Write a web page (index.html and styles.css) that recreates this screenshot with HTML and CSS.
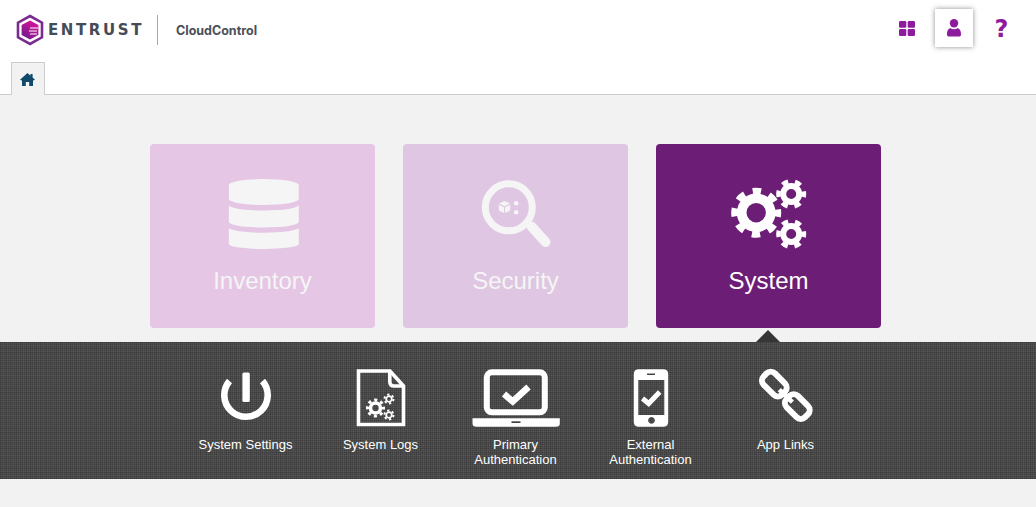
FILE: index.html
```html
<!DOCTYPE html>
<html lang="en">
<head>
  <meta charset="UTF-8">
  <meta name="viewport" content="width=device-width, initial-scale=1.0">
  <title>CloudControl</title>
  <link rel="stylesheet" href="styles.css">
</head>
<body>
  <header class="topbar">
    <div class="brand">
      <svg class="brand-mark" viewBox="0 0 28 32" aria-hidden="true">
        <defs>
          <linearGradient id="markFill" x1="0.8" y1="0" x2="0.2" y2="1">
            <stop offset="0" stop-color="#e0109a"/>
            <stop offset="1" stop-color="#6a1f8c"/>
          </linearGradient>
        </defs>
        <path d="M14 2 26 8.7V23.3L14 30 2 23.3V8.7Z" fill="none" stroke="#7b2a90" stroke-width="2.6"/>
        <path d="M14 6.4 22.4 11V21L14 25.6 5.6 21V11Z" fill="url(#markFill)"/>
        <path d="M14 14h8M13 17h8M14 20h7" stroke="#fff" stroke-width="1.2"/>
      </svg>
      <span class="brand-name">ENTRUST</span>
      <span class="brand-rule"></span>
      <span class="brand-product">CloudControl</span>
    </div>
    <nav class="tools">
      <a class="tool">
        <svg width="16" height="15" viewBox="0 0 16 15" aria-hidden="true">
          <rect width="7.3" height="6.7" rx="1.2"/><rect x="8.7" width="7.3" height="6.7" rx="1.2"/>
          <rect y="8.1" width="7.3" height="6.9" rx="1.2"/><rect x="8.7" y="8.1" width="7.3" height="6.9" rx="1.2"/>
        </svg>
      </a>
      <a class="tool tool-active">
        <svg width="14" height="18" viewBox="0 0 14 18" aria-hidden="true">
          <circle cx="7" cy="4.3" r="4.2"/>
          <path d="M0 15.5C0 11.5 1.6 9.3 3.6 9.3 4.6 10 5.7 10.3 7 10.3S9.4 10 10.4 9.3C12.4 9.3 14 11.5 14 15.5 14 17 13 17.6 12 17.6H2C1 17.6 0 17 0 15.5Z"/>
        </svg>
      </a>
      <a class="tool tool-help">?</a>
    </nav>
  </header>

  <div class="tabs">
    <a class="tab">
      <svg width="15" height="13" viewBox="0 0 15 13" aria-hidden="true">
        <path d="M7.5 0 10.5 2.7V1H12.6V4.6L15 6.8 13.4 7.6 13 7.3V13H9.2V9H5.8V13H2V7.3L1.6 7.6 0 6.8Z"/>
      </svg>
    </a>
  </div>

  <main class="content">
    <section class="cards">
      <a class="card card-inventory">
        <svg class="card-icon" viewBox="-55 -40 110 80" aria-hidden="true">
          <g transform="translate(.8 0)">
            <path d="M-35-29A35 6 0 0 1 35-29V-15A35 6 0 0 1-35-15Z"/>
            <path d="M-35-9A35 5.5 0 0 0 35-9V8A35 5.5 0 0 1-35 8Z"/>
            <path d="M-35 13.7A35 5 0 0 0 35 13.7V30A35 5 0 0 1-35 30Z"/>
          </g>
        </svg>
        <span class="card-label">Inventory</span>
      </a>
      <a class="card card-security">
        <svg class="card-icon" viewBox="-55 -40 110 80" aria-hidden="true">
          <circle class="line" cx="-7.2" cy="-6.7" r="23.5" stroke-width="7"/>
          <path class="line" d="M15.5 12.5 29.5 28" stroke-width="10"/>
          <path d="M-17-10.4-11.5-13-6-10.4-11.5-7.8ZM-17.2-9.2-12-6.7V-1L-17.2-3.4ZM-5.8-9.2-11-6.7V-1L-5.8-3.4Z"/>
          <circle cx=".2" cy="-10.7" r="2.3"/>
          <circle cx=".2" cy="-1.7" r="2.3"/>
        </svg>
        <span class="card-label">Security</span>
      </a>
      <a class="card card-system">
        <svg class="card-icon" viewBox="-55 -40 110 80" aria-hidden="true">
          <g transform="translate(-12.8 -1.3)">
            <circle class="line" r="14.5" stroke-width="9.6"/>
            <circle class="line" r="21.5" stroke-width="7" stroke-dasharray="8.4 8.49" stroke-dashoffset="4.2"/>
          </g>
          <g transform="translate(22.2 -20)">
            <circle class="line" r="8" stroke-width="6"/>
            <circle class="line" r="12.8" stroke-width="4.4" stroke-dasharray="6.4 7" stroke-dashoffset="3.2"/>
          </g>
          <g transform="translate(22.2 20)">
            <circle class="line" r="8" stroke-width="6"/>
            <circle class="line" r="12.8" stroke-width="4.4" stroke-dasharray="6.4 7" stroke-dashoffset="3.2"/>
          </g>
        </svg>
        <span class="card-label">System</span>
      </a>
    </section>

    <section class="menu">
      <a class="menu-item">
        <svg class="menu-icon" viewBox="-45 -30 90 60" aria-hidden="true">
          <path class="line" d="M-16.5-17A21.7 21.7 0 1 0 16.5-17" stroke-width="6.6"/>
          <rect x="-3.6" y="-25.5" width="7.4" height="29.5" rx="1.5"/>
        </svg>
        <span class="menu-label">System Settings</span>
      </a>
      <a class="menu-item">
        <svg class="menu-icon" viewBox="-45 -30 90 60" aria-hidden="true">
          <path class="line" d="M-22.5-27H9L22.5-12V26.5H-22.5Z" stroke-width="3.6"/>
          <path class="line" d="M8.8-27V-16.5Q8.8-12 13-12H22.5" stroke-width="3.6"/>
          <g transform="translate(-5.5 10)">
            <circle class="line" r="5" stroke-width="3.6"/>
            <circle class="line" r="8" stroke-width="3" stroke-dasharray="3 3.28" stroke-dashoffset="1.5"/>
          </g>
          <g transform="translate(8 1)">
            <circle class="line" r="2.8" stroke-width="1.8"/>
            <circle class="line" r="4.5" stroke-width="2" stroke-dasharray="2.2 2.51"/>
          </g>
          <g transform="translate(8 17)">
            <circle class="line" r="2.8" stroke-width="1.8"/>
            <circle class="line" r="4.5" stroke-width="2" stroke-dasharray="2.2 2.51"/>
          </g>
        </svg>
        <span class="menu-label">System Logs</span>
      </a>
      <a class="menu-item">
        <svg class="menu-icon" viewBox="-45 -30 90 60" aria-hidden="true">
          <rect class="line" x="-29.2" y="-25.7" width="58" height="40" rx="5" stroke-width="6"/>
          <path class="line" d="M-12-4-3.2 3.5 12.5-11" stroke-width="6.5"/>
          <path fill-rule="evenodd" d="M-43.5 20.3H43.8V25.5Q43.8 28.7 40 28.7H-39.5Q-43.5 28.7-43.5 25.5ZM-4.5 23.3V25H4.5V23.3Z"/>
        </svg>
        <span class="menu-label">Primary Authentication</span>
      </a>
      <a class="menu-item">
        <svg class="menu-icon" viewBox="-45 -30 90 60" aria-hidden="true">
          <path fill-rule="evenodd" d="M-12.2-28.7H12.2Q17.2-28.7 17.2-23.7V23.7Q17.2 28.7 12.2 28.7H-12.2Q-17.2 28.7-17.2 23.7V-23.7Q-17.2-28.7-12.2-28.7ZM-12.7-18V17H13.3V-18ZM-4-24.4V-23H4V-24.4ZM.5 19a3.4 3.4 0 1 0 .01 0Z"/>
          <path class="line" d="M-8.5 .5-2.3 5.5 8.7-6" stroke-width="5"/>
        </svg>
        <span class="menu-label">External Authentication</span>
      </a>
      <a class="menu-item">
        <svg class="menu-icon" viewBox="-45 -30 90 60" aria-hidden="true">
          <g transform="translate(.3 1.6)">
            <rect class="line" x="-25" y="-23.5" width="26" height="16" rx="6" transform="rotate(45 -12 -15.5)" stroke-width="6"/>
            <rect class="line" x="-2" y="-1" width="26" height="16" rx="6" transform="rotate(45 11 7)" stroke-width="6"/>
            <path class="line" d="M-7-10 6 2.5" stroke-width="4.6"/>
          </g>
        </svg>
        <span class="menu-label">App Links</span>
      </a>
    </section>
  </main>
</body>
</html>
```

FILE: styles.css
```css
body {
  margin: 0;
  height: 507px;
  overflow: hidden;
  font-family: "Liberation Sans", Arial, sans-serif;
  background: #f2f2f2;
}
/* header */
.topbar {
  height: 62px;
  box-sizing: border-box;
  display: flex;
  justify-content: space-between;
  padding: 9px 16px 0 16px;
  background: #fff;
}
.brand {
  display: flex;
  align-items: center;
  height: 42px;
}
.brand-mark {
  width: 28px;
  height: 32px;
}
.brand-name {
  margin-left: 4px;
  font-family: "DejaVu Sans", sans-serif;
  font-weight: 700;
  font-size: 15px;
  letter-spacing: 2.6px;
  color: #454b57;
}
.brand-rule {
  width: 1px;
  height: 30px;
  margin-left: 13px;
  background: #b79bbb;
}
.brand-product {
  margin-left: 18px;
  font-family: "Inter", sans-serif;
  font-weight: 700;
  font-size: 12.5px;
  color: #4a4f57;
}
.tools {
  display: flex;
  gap: 9px;
}
.tool {
  width: 38px;
  height: 38px;
  display: flex;
  align-items: center;
  justify-content: center;
  color: #8e1a9e;
  fill: #8e1a9e;
}
.tool-active {
  box-shadow: 0 0 5px rgba(0,0,0,0.45);
}
.tool-help {
  font-family: "DejaVu Sans", sans-serif;
  font-weight: 700;
  font-size: 24px;
  padding: 2px 0 0 1px;
  box-sizing: border-box;
}
/* tab strip */
.tabs {
  height: 33px;
  box-sizing: border-box;
  padding-left: 11px;
  background: #fff;
  border-bottom: 1px solid #ccc;
}
.tab {
  display: flex;
  align-items: center;
  justify-content: center;
  width: 34px;
  height: 33px;
  box-sizing: border-box;
  padding-right: 2px;
  background: #f2f2f2;
  border: 1px solid #ccc;
  border-bottom: none;
  fill: #0f4a69;
}
/* tiles */
.content {
  padding-top: 49px;
}
.cards {
  display: flex;
  justify-content: center;
  gap: 28px;
  padding-right: 5px;
  margin-bottom: 14px;
}
.card {
  width: 225px;
  height: 184px;
  box-sizing: border-box;
  padding-top: 30px;
  border-radius: 4px;
  display: flex;
  flex-direction: column;
  align-items: center;
  color: #f5f5f5;
  fill: #f5f5f5;
}
.card-inventory { background: #e5c6e4; }
.card-security { background: #dfc6e2; }
.card-system {
  background: #6c1d75;
  color: #fff;
  fill: #fff;
}
.card-icon {
  width: 110px;
  height: 80px;
}
.card-label {
  margin-top: 13px;
  font-size: 24px;
  line-height: 28px;
}
.line {
  fill: none;
  stroke: currentColor;
  stroke-linecap: butt;
}
.card-security .line:nth-child(2) {
  stroke-linecap: round;
}
/* lower menu band */
.menu {
  position: relative;
  height: 137px;
  box-sizing: border-box;
  display: flex;
  justify-content: center;
  padding: 26px 5px 0 0;
  color: #fff;
  fill: #fff;
  background-color: #585858;
  background-image:
    repeating-linear-gradient(0deg, rgba(0,0,0,0.15) 0 1px, transparent 1px 2px),
    repeating-linear-gradient(90deg, rgba(0,0,0,0.15) 0 1px, transparent 1px 2px),
    repeating-linear-gradient(0deg, rgba(0,0,0,0.05) 0 2px, transparent 2px 5px),
    repeating-linear-gradient(90deg, rgba(0,0,0,0.05) 0 2px, transparent 2px 5px);
}
.menu::before {
  content: "";
  position: absolute;
  left: 756px;
  top: -12px;
  border-left: 12px solid transparent;
  border-right: 12px solid transparent;
  border-bottom: 12px solid #363636;
}
.menu-item {
  width: 135px;
  display: flex;
  flex-direction: column;
  align-items: center;
}
.menu-icon {
  width: 90px;
  height: 60px;
}
.menu-label {
  width: 100px;
  margin-top: 9px;
  font-size: 13px;
  line-height: 15px;
  text-align: center;
}
```
